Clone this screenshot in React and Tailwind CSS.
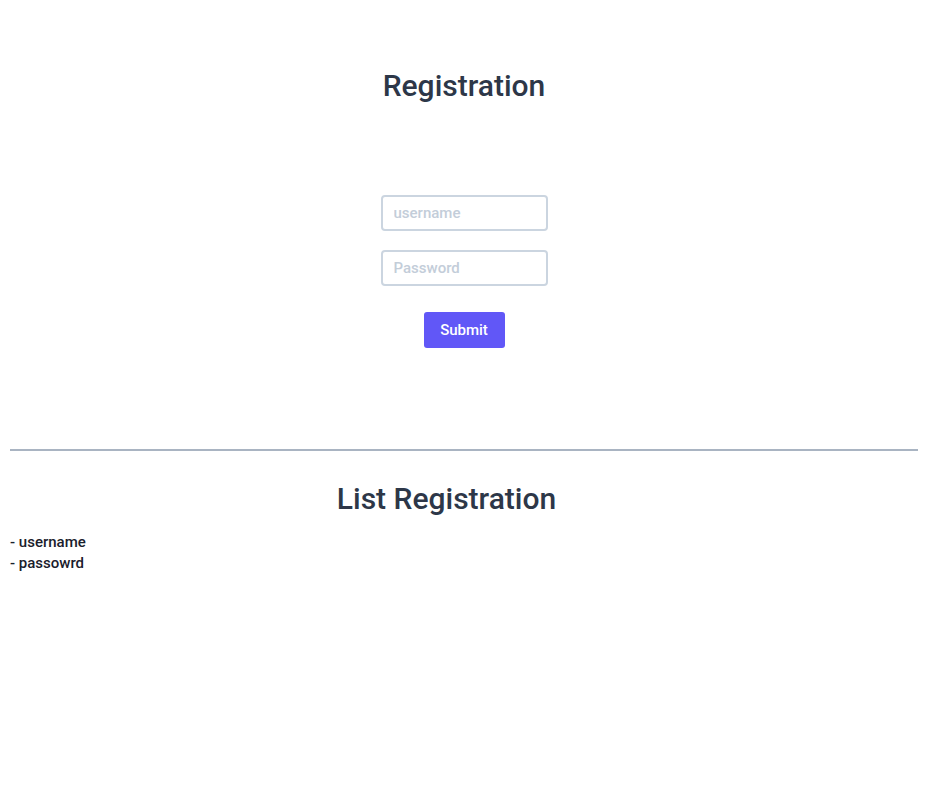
import { useState } from 'react'

export default function App() {
  const [username, setUsername] = useState('')
  const [password, setPassword] = useState('')

  return (
    <div className="min-h-screen bg-white px-[10px] text-[#2d3748]" style={{ fontFamily: 'Roboto, "Noto Sans", sans-serif' }}>
      <h1 className="pt-[64px] text-center text-[30px] leading-[44px] font-medium">Registration</h1>

      <form className="mt-[87px] flex flex-col items-center" onSubmit={(e) => e.preventDefault()}>
        <input
          type="text"
          value={username}
          onChange={(e) => setUsername(e.target.value)}
          placeholder="username"
          className="w-[167px] h-[36px] px-[11px] border-2 border-[#cbd5e0] rounded-[4px] text-[15px] font-medium placeholder-[#c3cdd9] outline-none"
        />
        <input
          type="password"
          value={password}
          onChange={(e) => setPassword(e.target.value)}
          placeholder="Password"
          className="mt-[19px] w-[167px] h-[36px] px-[11px] border-2 border-[#cbd5e0] rounded-[4px] text-[15px] font-medium placeholder-[#c3cdd9] outline-none"
        />
        <button
          type="submit"
          className="mt-[26px] w-[81px] h-[36px] bg-[#6157f7] text-white text-[15px] font-medium rounded-[3px]"
        >
          Submit
        </button>
      </form>

      <hr className="mt-[101px] border-0 h-[2px] bg-[#a9b4c2]" />

      <h2 className="mt-[30px] pr-[35px] text-center text-[30px] leading-[36px] font-medium">List Registration</h2>

      <ul className="mt-[15px] text-[15px] leading-[21px] font-medium text-[#1a202c]">
        <li>- username</li>
        <li>- passowrd</li>
      </ul>
    </div>
  )
}
